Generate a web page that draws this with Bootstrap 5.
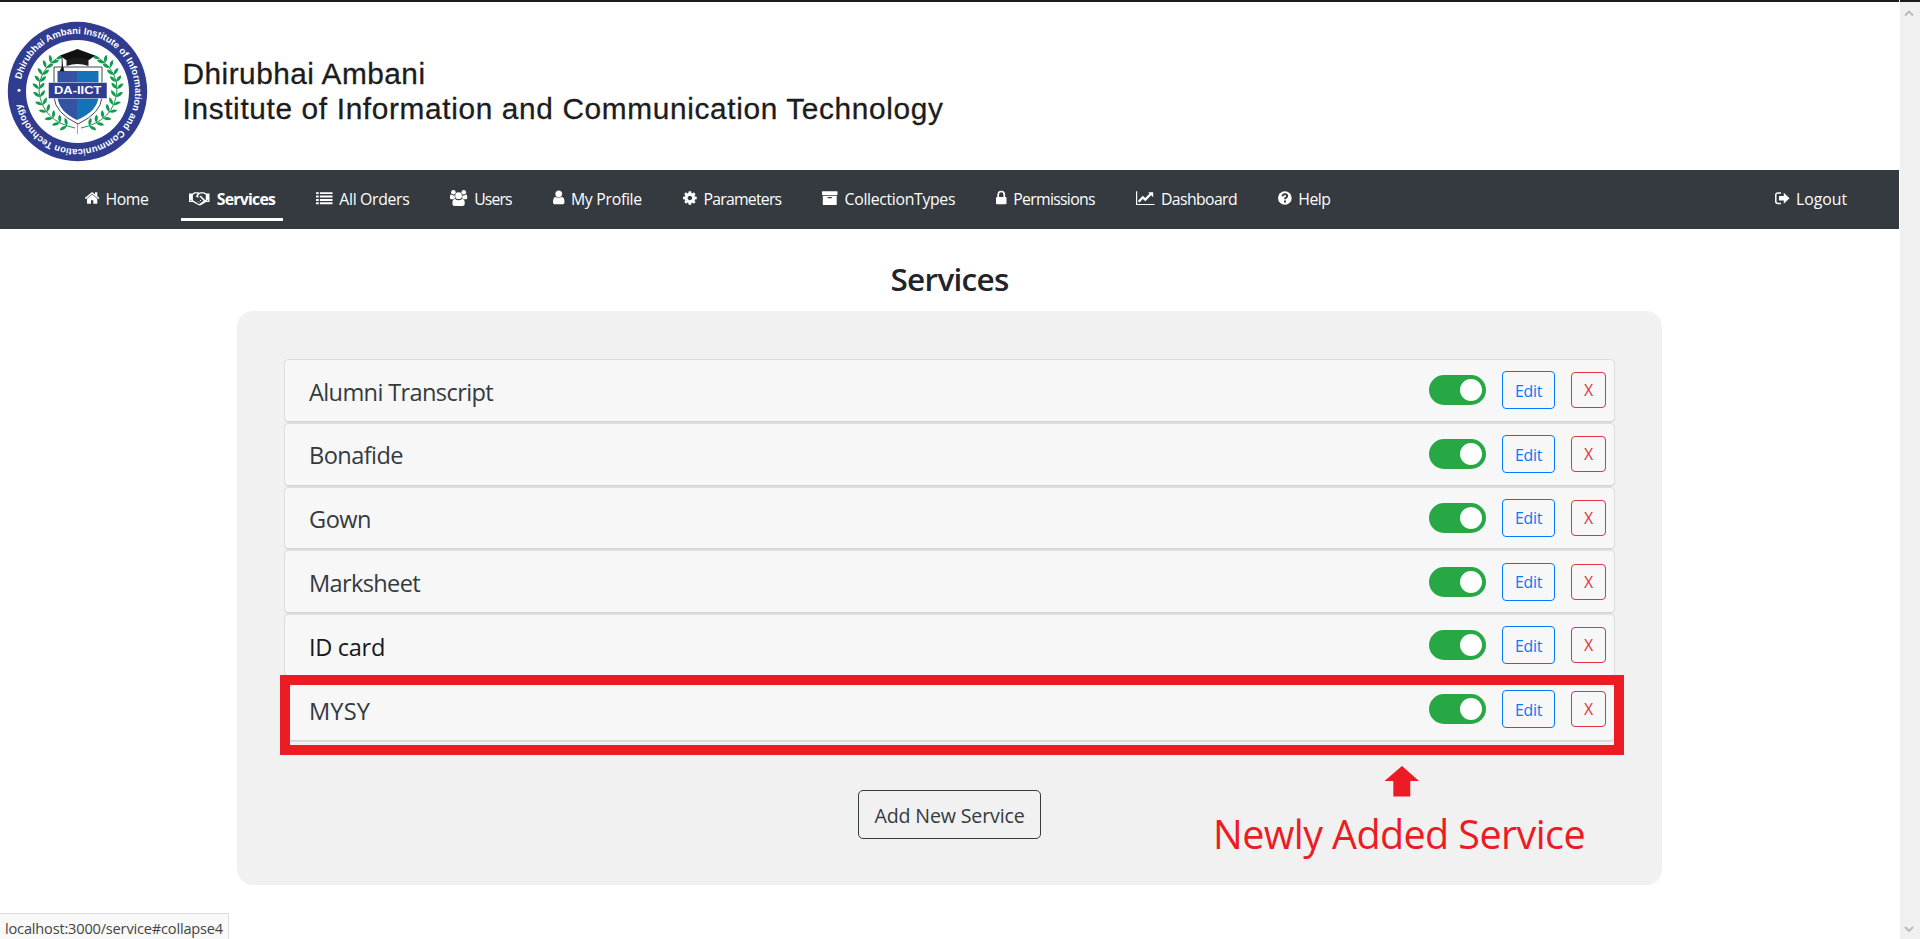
<!DOCTYPE html>
<html lang="en">
<head>
<meta charset="utf-8">
<title>Services</title>
<link href="https://cdn.jsdelivr.net/npm/bootstrap@5.3.0/dist/css/bootstrap.min.css" rel="stylesheet">
<style>
body{font-family:"Open Sans","Noto Sans",sans-serif;color:#212529;background:#fff;height:939px;overflow:hidden}
.page-area{width:1899px;height:939px;border-top:2px solid #1b1b1b}
.masthead{height:168px}
.masthead-title{font:29.8px/35.5px "Liberation Sans",Arial,sans-serif;color:#1c1c1c;padding:53.500px 0 0 22.500px;-webkit-text-stroke:.3px #1c1c1c}
.masthead-title div,.fit{white-space:nowrap}
.fit{display:inline-block}
.main-nav{height:59px;background:#343a40;padding-left:76.5px}
.main-nav .nav-link{color:#fff;font-size:15.8px;line-height:24px;padding:8px 8px 7px;height:42px;border-bottom:3px solid transparent;display:flex;align-items:center}
.main-nav ul{gap:25px;height:51px;align-items:end}
.main-nav .nav-link.active{font-weight:700;border-bottom-color:#fff}
.main-nav svg{height:16px;fill:#fff;flex:none;margin-right:6.7px;overflow:visible;position:relative;top:-.7px}
.logout-item{margin-right:44px}
h2.title{font-size:31.5px;font-weight:600;line-height:38px;margin:31px 0 13px}
.panel{width:1425px;height:574px;border-radius:16px;background:#f1f1f1;margin-left:237px;padding:48px 47px 0;position:relative}
.service-row{height:63.8px;background:#f7f7f7;border:1px solid #dedede;border-radius:4px;padding:0 8px 1.5px 24px;box-shadow:inset 0 -1px 0 #d3d3d3}
.service-name{font-size:23.6px;line-height:58px;padding-top:3px;color:#343a40}
.service-name.hovered{color:#16181b}
.toggle{width:57px;height:30px;border-radius:15px;background:#28a745;padding:4px;margin-right:16px}
.toggle i{width:22px;height:22px;border-radius:50%;background:#fff;display:block;margin-left:27px}
.edit-btn,.x-btn{padding:0;background:transparent;font-size:15.8px;display:flex;align-items:center;justify-content:center}
.edit-btn{width:53px;height:38px;color:#007bff;border-color:#007bff;margin-right:16px;border-radius:4px;padding-top:3px}
.x-btn{width:35px;height:36px;color:#dc3545;border-color:#dc3545;border-radius:4px;padding-top:2px}
.add-btn{width:183px;height:49px;border:1px solid #343a40;color:#343a40;border-radius:5px;font-size:19.6px;margin-top:48px;padding:2px 0 0}
.mark-frame{left:43px;top:364px;width:1344px;height:80px;border:10px solid #ed1c24}
.mark-arrow{left:1147px;top:455px}
.mark-text{left:976px;top:495.5px;font-size:39.5px;line-height:54px;color:#ed1c24}
.status{left:0;bottom:0;width:229px;height:26px;background:#f9f9f9;border:1px solid #dcdcdc;border-left:0;border-bottom:0;font-size:14.6px;line-height:28px;padding-left:5px;color:#444}
.scroll-track{width:20px;height:939px;margin-left:1px;background:#f0f0f0;border-top:2px solid #1b1b1b;padding:8px 0 6px 4px}
</style>
</head>
<body>
<div class="d-flex">
<div class="page-area">
  <header class="masthead d-flex">
    <svg width="160" height="168" viewBox="0 2 160 168">
      <defs>
        <path id="ring" d="M19.900 91.500a57.600 57.600 0 1 1 115.200 0a57.600 57.600 0 1 1-115.200 0"/>
        <path id="leaf" d="M0 0q1-5 6-6q0 5-6 6z"/>
        <g id="branch" fill="#149a4c">
          <path d="M75 128Q42 121 39 91Q38 72 56 59" fill="none" stroke="#149a4c" stroke-width="1"/>
          <g id="leaves">
          <use href="#leaf" transform="translate(56 59) rotate(20)"/>
          <use href="#leaf" transform="translate(51 63) rotate(-55)"/><use href="#leaf" transform="translate(51 63) rotate(25)"/>
          <use href="#leaf" transform="translate(46 68) rotate(-65)"/><use href="#leaf" transform="translate(46 68) rotate(15)"/>
          <use href="#leaf" transform="translate(42.500 75) rotate(-80)"/><use href="#leaf" transform="translate(42.500 75) rotate(5)"/>
          <use href="#leaf" transform="translate(40 82) rotate(-85)"/><use href="#leaf" transform="translate(40 82) rotate(0)"/>
          <use href="#leaf" transform="translate(39 89) rotate(-95)"/><use href="#leaf" transform="translate(39 89) rotate(-5)"/>
          <use href="#leaf" transform="translate(40 97) rotate(-100)"/><use href="#leaf" transform="translate(40 97) rotate(-10)"/>
          <use href="#leaf" transform="translate(43 105) rotate(-115)"/><use href="#leaf" transform="translate(43 105) rotate(-20)"/>
          <use href="#leaf" transform="translate(47 112) rotate(-125)"/><use href="#leaf" transform="translate(47 112) rotate(-30)"/>
          <use href="#leaf" transform="translate(53 118.500) rotate(-140)"/><use href="#leaf" transform="translate(53 118.500) rotate(-40)"/>
          <use href="#leaf" transform="translate(60 123) rotate(-150)"/><use href="#leaf" transform="translate(60 123) rotate(-50)"/>
          <use href="#leaf" transform="translate(67 126) rotate(-165)"/><use href="#leaf" transform="translate(67 126) rotate(-60)"/>
          </g>
        </g>
      </defs>
      <circle cx="77.500" cy="91.500" r="69.700" fill="#2f3c8f"/>
      <circle cx="77.500" cy="91.500" r="51.500" fill="#fff"/>
      <text transform="rotate(12 77.500 91.500)" font-family="Liberation Sans, Arial, sans-serif" font-weight="700" font-size="9.500" fill="#fff"><textPath href="#ring" textLength="337" lengthAdjust="spacing">Dhirubhai Ambani Institute of Information and Communication Technology</textPath></text>
      <circle cx="19" cy="90.300" r="1.500" fill="#fff"/>
      <use href="#branch"/><use href="#branch" transform="translate(156 0) scale(-1 1)"/>
      <path d="M77.500 120v14" stroke="#6a8a78" stroke-width=".7"/>
      <path d="M54 67h48v30q-1 16-24 27q-23-11-24-27z" fill="#fff" stroke="#45484f" stroke-width="1"/>
      <path d="M57.500 71H77v49Q58 111 57.500 96z" fill="#3553a3"/>
      <path d="M77 71h21.500v25Q98 111 77 120z" fill="#1273b8"/>
      <path d="M66.500 57v9q11-4 22 0v-9z" fill="#1d1d1f"/>
      <path d="M60 55.500L77.500 49L95 55.500L89 60Q78 56 66 60z" fill="#111"/>
      <path d="M62 56v11l-2 4h4l-1-4" fill="#111" stroke="#111" stroke-width=".6"/>
      <path d="M48.500 82.500h58.500v16H48.500z" fill="#2f3c8f" stroke="#fff" stroke-width=".5"/>
      <text x="54" y="94.300" textLength="47.500" lengthAdjust="spacingAndGlyphs" font-family="Liberation Sans, Arial, sans-serif" font-weight="700" font-size="10.800" fill="#fff">DA-IICT</text>
    </svg>
    <div class="masthead-title">
      <div><span class="fit" data-w="243">Dhirubhai Ambani</span></div>
      <div><span class="fit" data-w="761">Institute of Information and Communication Technology</span></div>
    </div>
  </header>

  <nav class="main-nav d-flex">
    <ul class="nav flex-nowrap">
      <li><a class="nav-link" href="#"><svg width="14.300" viewBox="96 0 1600 1792"><path d="M1472 992v480q0 26-19 45t-45 19h-384v-384h-256v384h-384q-26 0-45-19t-19-45v-480q0-1 .5-3t.5-3l575-474 575 474q1 2 1 6zm223-69l-62 74q-8 9-21 11h-3q-13 0-21-7l-692-577-692 577q-12 8-24 7-13-2-21-11l-62-74q-8-10-7-23.500t11-21.500l719-599q32-26 76-26t76 26l244 204v-195q0-14 9-23t23-9h192q14 0 23 9t9 23v408l219 182q10 8 11 21.500t-7 23.500z"/></svg><span class="fit" data-w="43">Home</span></a></li>
      <li><a class="nav-link active" href="#"><svg width="20.500" viewBox="0 0 21 16"><path d="M0 3.500h3.500L5.500 2h4l1 .6 1-.6h4l2 1.500H21v8.500h-3.500l-5 3.200q-1.500 1-3 0L3.800 12H0z"/><path d="M4 4.700h.3L6 3.400h3L7 6.200q1.500 2.300 4 .5l4 4-4 3.200q-.8.600-1.600 0L4.500 10.600H4zM12 3.400h3l2 1.300h.2v5.400h-.7L12 5.400q-2 2-3 .7l2-2.500z" fill="#343a40"/><path d="M9.500 11.500l1 1M11.300 10l1.200 1.200" stroke="#fff" fill="none"/><circle cx="1.900" cy="10.300" r=".6" fill="#343a40"/><circle cx="19.100" cy="10.300" r=".6" fill="#343a40"/></svg><span class="fit" data-w="58.500">Services</span></a></li>
      <li><a class="nav-link" href="#"><svg width="16.500" viewBox="0 0 17 16"><path d="M0 2h2.800v2H0zM4 2h13v2H4zM0 5.500h2.800v2H0zM4 5.500h13v2H4zM0 9h2.800v2H0zM4 9h13v2H4zM0 12.400h2.800v2H0zM4 12.400h13v2H4z"/></svg><span class="fit" data-w="70">All Orders</span></a></li>
      <li><a class="nav-link" href="#"><svg width="17.200" viewBox="0 0 17.200 16"><circle cx="3.400" cy="2.300" r="2.300"/><circle cx="13.800" cy="2.300" r="2.300"/><path d="M0 8.200V6.400Q0 4.300 1.300 4.600Q3.300 6 4.700 5.200Q4.500 7 5.600 8.200Q4 8.300 3.200 9.200H1.200Q0 9.200 0 8.200zM17.200 8.200V6.400Q17.200 4.300 15.900 4.600Q13.900 6 12.500 5.200Q12.700 7 11.600 8.200Q13.200 8.300 14 9.200H16Q17.200 9.200 17.200 8.200z"/><circle cx="8.600" cy="5.700" r="3.400"/><path d="M2.400 13.500Q2.400 8.700 5 8.900Q8.600 11.500 12.200 8.900Q14.800 8.700 14.800 13.500Q14.800 16 12.500 16H4.700Q2.400 16 2.400 13.500z"/></svg><span class="fit" data-w="37.500">Users</span></a></li>
      <li><a class="nav-link" href="#"><svg width="11.500" viewBox="256 0 1280 1792"><path d="M1536 1399q0 109-62.500 187t-150.500 78h-854q-88 0-150.500-78t-62.500-187q0-85 8.500-160.500t31.500-152 58.500-131 94-89 134.500-34.500q131 128 313 128t313-128q76 0 134.500 34.500t94 89 58.500 131 31.500 152 8.500 160.500zm-256-887q0 159-112.500 271.500t-271.500 112.500-271.500-112.500-112.500-271.500 112.500-271.500 271.500-112.500 271.500 112.500 112.500 271.500z" transform="translate(0 -60)"/></svg><span class="fit" data-w="71">My Profile</span></a></li>
      <li><a class="nav-link" href="#"><svg width="13.800" viewBox="128 0 1536 1792"><path d="M1152 896q0-106-75-181t-181-75-181 75-75 181 75 181 181 75 181-75 75-181zm512-109v222q0 12-8 23t-20 13l-185 28q-19 54-39 91 35 50 107 138 10 12 10 25t-9 23q-27 37-99 108t-94 71q-12 0-26-9l-138-108q-44 23-91 38-16 136-29 186-7 28-36 28h-222q-14 0-24.500-8.500t-11.500-21.500l-28-184q-49-16-90-37l-141 107q-10 9-25 9-14 0-25-11-126-114-165-168-7-10-7-23 0-12 8-23 15-21 51-66.500t54-70.500q-27-50-41-99l-183-27q-13-2-21-12.500t-8-23.500v-222q0-12 8-23t19-13l186-28q14-46 39-92-40-57-107-138-10-12-10-24 0-10 9-23 26-36 98.500-107.500t94.500-71.500q13 0 26 10l138 107q44-23 91-38 16-136 29-186 7-28 36-28h222q14 0 24.500 8.500t11.500 21.500l28 184q49 16 90 37l142-107q9-9 24-9 13 0 25 10 129 119 165 170 7 8 7 22 0 12-8 23-15 21-51 66.500t-54 70.500q26 50 41 98l183 28q13 2 21 12.500t8 23.500z"/></svg><span class="fit" data-w="78">Parameters</span></a></li>
      <li><a class="nav-link" href="#"><svg width="15.500" viewBox="0 0 15.500 16"><path fill-rule="evenodd" d="M.5 1.200h14.500q.5 0 .5.500v2.800q0 .5-.5.500H.5Q0 5 0 4.500V1.700q0-.5.500-.5zM.8 5.800h13.900v8.600q0 .6-.6.600H1.400q-.6 0-.6-.6zM6 7q-.5 0-.5.600t.5.600h3.500q.5 0 .5-.6T9.500 7z"/></svg><span class="fit" data-w="110.500">CollectionTypes</span></a></li>
      <li><a class="nav-link" href="#"><svg width="10.500" viewBox="0 0 10.500 16"><path d="M1 7h8.500q1 0 1 1v5.200q0 1-1 1H1q-1 0-1-1V8q0-1 1-1z"/><path d="M2.200 7.500V4.800a3.050 3.300 0 0 1 6.100 0v2.700" fill="none" stroke="#fff" stroke-width="1.700"/></svg><span class="fit" data-w="81.500">Permissions</span></a></li>
      <li><a class="nav-link" href="#"><svg width="18.500" viewBox="0 0 18.500 16"><path d="M0 1.200h1.200v12.700h17.300v1.200H0z"/><path d="M2.700 11.800L6.800 7.300l2.500 2.300L14.700 4" fill="none" stroke="#fff" stroke-width="2.300"/><path d="M12.200 2.200h4.600q.4 0 .4.400v4.600z"/></svg><span class="fit" data-w="76">Dashboard</span></a></li>
      <li><a class="nav-link" href="#"><svg width="13.700" viewBox="0 0 13.700 16"><circle cx="6.850" cy="8" r="6.850"/><path d="M4.500 6.300Q4.800 4.100 7 4.100Q9.200 4.300 9.200 6Q9.200 7.100 8 7.700Q7 8.200 7 9.300" fill="none" stroke="#343a40" stroke-width="1.900"/><path d="M6 10.500h2v2H6z" fill="#343a40"/></svg><span class="fit" data-w="32">Help</span></a></li>
    </ul>
    <ul class="nav ms-auto logout-item">
      <li><a class="nav-link" href="#"><svg width="14.500" viewBox="0 0 14.500 16"><path d="M6 3H3Q.8 3 .8 5v6.500q0 2 2.200 2h3" fill="none" stroke="#fff" stroke-width="1.500"/><path d="M14.500 8.200L8.800 2.700v3.200H4.500q-.5 0-.5.500v3.700q0 .5.500.5h4.300v3.200z"/></svg><span class="fit" data-w="51">Logout</span></a></li>
    </ul>
  </nav>

  <h2 class="title text-center"><span class="fit" data-w="118">Services</span></h2>

  <main class="panel">
    <div id="services"></div>
    <div class="text-center"><button class="btn add-btn"><span class="fit" data-w="150">Add New Service</span></button></div>
    <div class="mark-frame position-absolute"></div>
    <svg class="mark-arrow position-absolute" width="36" height="31" viewBox="0 0 36 31"><path d="M18 0l17 15h-8.700v15.500h-17V15H.5z" fill="#ed1c24"/></svg>
    <div class="mark-text position-absolute"><span class="fit" data-w="372">Newly Added Service</span></div>
  </main>
</div>
<div class="scroll-track d-flex flex-column justify-content-between">
  <svg width="10" height="7" viewBox="0 0 10 7"><path d="M1 5.500l4-4 4 4" fill="none" stroke="#b8b8b8" stroke-width="1.800"/></svg>
  <svg width="10" height="7" viewBox="0 0 10 7"><path d="M1 1l4 4 4-4" fill="none" stroke="#b8b8b8" stroke-width="1.800"/></svg>
</div>
</div>
<div class="status position-absolute"><span class="fit" data-w="218">localhost:3000/service#collapse4</span></div>

<script src="https://cdn.jsdelivr.net/npm/bootstrap@5.3.0/dist/js/bootstrap.bundle.min.js"></script>
<script>
const services = [["Alumni Transcript",184],["Bonafide",94],["Gown",62],["Marksheet",111],["ID card",76],["MYSY",61]];
document.getElementById("services").innerHTML = services.map(([name, w]) => `
  <div class="service-row d-flex align-items-center">
    <div class="service-name me-auto${name === "ID card" ? " hovered" : ""}"><span class="fit" data-w="${w}">${name}</span></div>
    <div class="toggle"><i></i></div>
    <button class="btn edit-btn"><span class="fit" data-w="27">Edit</span></button>
    <button class="btn x-btn">X</button>
  </div>`).join("");
// Track each label so that it fills its intended width
document.querySelectorAll(".fit").forEach(el => {
  const w = +el.dataset.w, n = el.textContent.length;
  el.style.letterSpacing = (w - el.getBoundingClientRect().width) / n + "px";
});
</script>
</body>
</html>
